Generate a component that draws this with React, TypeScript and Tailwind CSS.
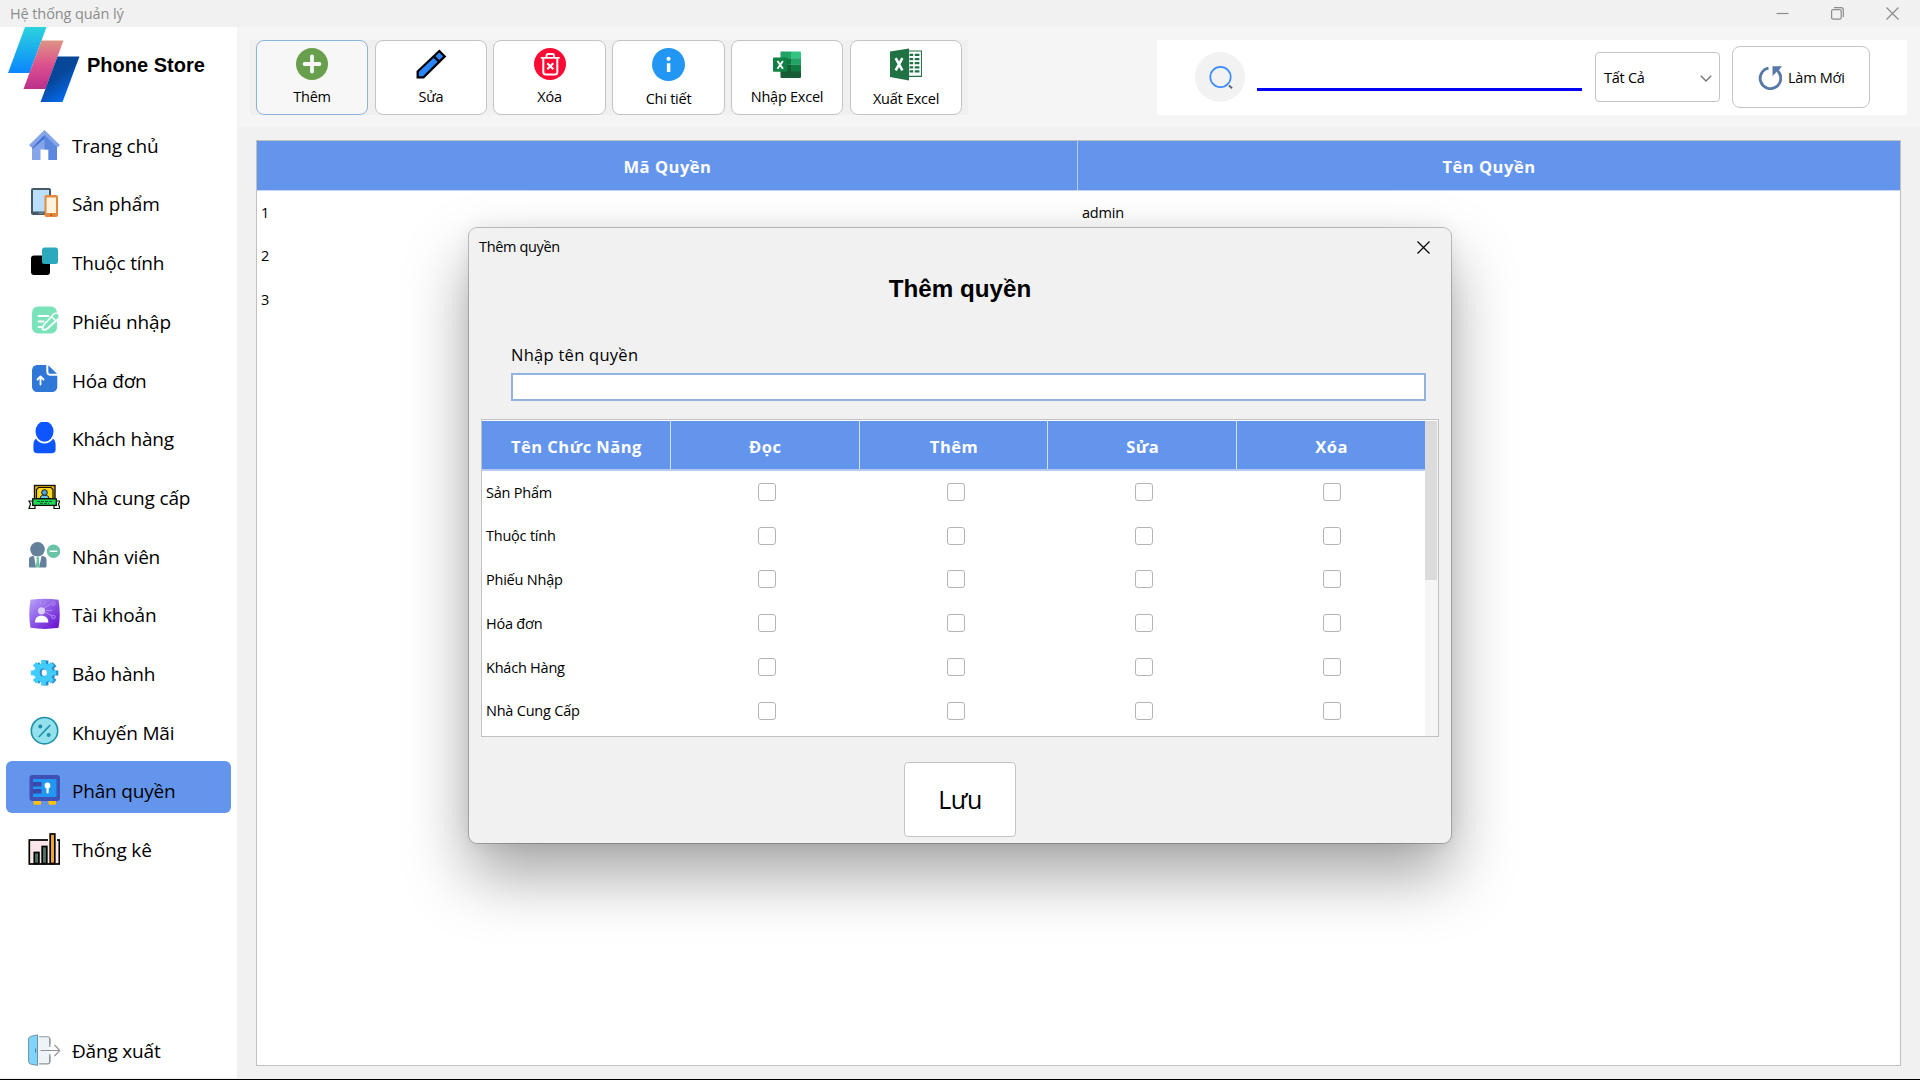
import type { ReactNode } from 'react';

function Icon({ children, className = 'h-8 w-8' }: { children: ReactNode; className?: string }) {
  return (
    <svg viewBox="0 0 32 32" fill="none" className={`shrink-0 ${className}`}>
      {children}
    </svg>
  );
}

const HomeIcon = (
  <Icon>
    <path d="M4 15 16.5 4 29 15v16h-8.5V20.500h-8V31H4z" fill="#86a5e8" />
    <path d="M16.500 4 29 15v16h-8.500V20.500h-4z" fill="#5b87df" />
    <path d="M16.500 1 1 16l2.500 2.500L16.500 6l13 12.500L32 16z" fill="#86a5e8" />
    <path d="M4.500 18.500 16.500 6v3.500L4.500 20z" fill="#3f6fd6" />
  </Icon>
);
const DevicesIcon = (
  <Icon>
    <rect x="3" y="1" width="20" height="27" rx="2" fill="#455a64" />
    <rect x="5" y="3" width="16" height="21.500" fill="#bbdefb" />
    <rect x="10.500" y="25.500" width="5" height="1.300" fill="#78909c" />
    <rect x="16.500" y="8" width="13.500" height="22" rx="2" fill="#e38939" />
    <rect x="18.500" y="10.500" width="9.500" height="15.500" fill="#fff3e0" />
    <circle cx="23.200" cy="28" r="1" fill="#a65a1c" />
  </Icon>
);
const AttributeIcon = (
  <Icon>
    <rect x="3" y="9.500" width="19" height="19.500" rx="3" fill="#000" />
    <rect x="14" y="1.500" width="16" height="16.500" rx="2.500" fill="#2ca9bc" />
  </Icon>
);
const ReceiptIcon = (
  <Icon>
    <rect x="4" y="1.600" width="25" height="27" rx="6" fill="#7be3ba" />
    <path d="M10.500 11h10M10.500 16.500h5M10.500 22h3" stroke="#fff" strokeWidth="1.800" strokeLinecap="round" />
    <path
      d="M25.500 9.500c1.500-1.500 3-1.500 4.500 0s1.500 3 0 4.500L19.500 23.500c-1.500 1.200-3.500 1.500-5 1 0-2 .3-3.500 1.500-5z"
      fill="#7be3ba"
      stroke="#fff"
      strokeWidth="1.800"
      strokeLinejoin="round"
    />
    <path d="m23.500 11.500 4 4" stroke="#fff" strokeWidth="1.500" />
    <path d="M26.500 9.500c1.300-1 2.300-.9 3.300.1s1.200 2 0 3.300l-1.500 1.300-3.300-3.300z" fill="#7be3ba" />
  </Icon>
);
const InvoiceIcon = (
  <Icon>
    <path
      d="M10 2h8.300v6.500c0 2.800 1.500 4.300 4.200 4.300H29.300V23c0 4-2 6-6 6H10c-4 0-6-2-6-6V8c0-4 2-6 6-6z"
      fill="#2f78d8"
    />
    <path d="M20.300 2.200 29 10.800h-6.300c-1.700 0-2.400-.8-2.400-2.400z" fill="#2f78d8" />
    <path d="M12.500 21.500v-8m-3 3 3-3 3 3" stroke="#fff" strokeWidth="1.800" strokeLinecap="round" strokeLinejoin="round" />
  </Icon>
);
const CustomerIcon = (
  <Icon>
    <ellipse cx="16.500" cy="9.500" rx="9" ry="10.200" fill="#0d56ff" />
    <path
      d="M8 16.800c1.800 3 5 4.800 8.500 4.800s6.700-1.800 8.500-4.800c1.800 1 2.600 3.500 2.600 6.200v4.500c0 2.500-1.300 3.700-4 3.700H9.400c-2.700 0-4-1.200-4-3.700V23c0-2.700.8-5.200 2.600-6.200z"
      fill="#0d56ff"
    />
  </Icon>
);
const SupplierIcon = (
  <Icon>
    <rect x="6.500" y="4.500" width="20.500" height="17" fill="#f7b500" stroke="#111" strokeWidth="1.400" />
    <path d="M10.500 6.500h12.500l2 2v9H8.500v-9z" fill="#ffd91a" stroke="#111" strokeWidth="1.200" />
    <path d="M12 17.500c.4-2.400 2-3.700 4.500-3.700s4.100 1.300 4.500 3.700z" fill="#6cc5f0" stroke="#111" strokeWidth="1" />
    <circle cx="16.500" cy="11.500" r="2.800" fill="#4aa8e8" stroke="#111" strokeWidth="1" />
    <path d="M5 20H1l1.500 3L1 27.500h6V22zM28 20h4l-1.500 3 1.500 4.500h-6V22z" fill="#eafbe9" stroke="#111" strokeWidth="1.200" />
    <rect x="4.700" y="17.800" width="23.600" height="6.600" fill="#1fd655" stroke="#111" strokeWidth="1.300" />
    <path d="M9 20.500h15M12 22.300h9" stroke="#0d5c26" strokeWidth="1" strokeDasharray="3 1" />
  </Icon>
);
const EmployeeIcon = (
  <Icon>
    <circle cx="9.500" cy="10.300" r="7.300" fill="#64809a" />
    <path d="M1 20.500c0-2.200 1.500-3.500 5-3.500l2 11.500H2.500c-1 0-1.500-.5-1.500-1.500zM18.500 20.500c0-2.200-1.500-3.500-5-3.500l-2.300 11.500H17c1 0 1.500-.5 1.500-1.500z" fill="#64809a" />
    <path d="m8.300 19 1.500-1.500 1.500 1.500-.5 1.500 1.200 8h-4.300l1.200-8z" fill="#6cc3a5" />
    <circle cx="25.500" cy="12.200" r="6.700" fill="#6cc3a5" />
    <path d="M22.300 12.200h6.400" stroke="#fff" strokeWidth="1.500" strokeLinecap="round" />
  </Icon>
);
const AccountIcon = (
  <Icon>
    <defs>
      <linearGradient id="account" x1="4" y1="2" x2="30" y2="30" gradientUnits="userSpaceOnUse">
        <stop stopColor="#b39bf7" />
        <stop offset=".5" stopColor="#8a55e6" />
        <stop offset="1" stopColor="#6a10cf" />
      </linearGradient>
    </defs>
    <path d="M2.500 1.800Q16.500-.5 30.500 1.800 33 16 30.500 29.800 16.500 32 2.500 29.800 0 16 2.500 1.800z" fill="url(#account)" />
    <path d="m16 10 7-4M17 14l7 4M13.500 7 12 3.500M15.500 7 18 3.500M18 12.500h6" stroke="#b68df5" strokeWidth="1" />
    <circle cx="25.500" cy="5.500" r="1.700" stroke="#b68df5" />
    <circle cx="25.500" cy="19" r="1.700" stroke="#b68df5" />
    <circle cx="13.500" cy="12.800" r="3.600" fill="#ddd0fb" />
    <path d="M7 24.500c0-4.500 2.200-6.800 6.500-6.800s6.800 2.300 6.800 6.800z" fill="#fff" />
  </Icon>
);
const GearIcon = (
  <Icon>
    <g fill="#2f86c4">
      <circle cx="17.800" cy="16" r="9.500" />
      <path
        d="M17.800 3.500v25M5.300 16h25M9 7.200l17.600 17.600M26.600 7.200 9 24.800"
        stroke="#2f86c4"
        strokeWidth="5.200"
      />
    </g>
    <circle cx="15.500" cy="15.800" r="9.500" fill="#41cdfb" />
    <path d="M15.500 3v25.600M2.800 15.800h25.400M6.500 6.800l18 18M24.500 6.800l-18 18" stroke="#41cdfb" strokeWidth="4.800" />
    <ellipse cx="15.300" cy="15.500" rx="3.600" ry="4" fill="#2f86c4" />
    <ellipse cx="16.300" cy="15.800" rx="2.600" ry="3.200" fill="#fff" />
  </Icon>
);
const PromoIcon = (
  <Icon>
    <circle cx="16.500" cy="15.700" r="13.200" fill="#94e1ee" stroke="#1d91a8" strokeWidth="1.600" />
    <path d="m11.300 21.500 10.500-11" stroke="#1d91a8" strokeWidth="1.700" strokeLinecap="round" />
    <circle cx="12.300" cy="11.600" r="2" fill="#1d91a8" />
    <circle cx="20.600" cy="19.900" r="2" fill="#1d91a8" />
  </Icon>
);
const SafeIcon = (
  <Icon>
    <path d="M5.500 26h7.500v3.500q0 1.300-1.300 1.300H6.800q-1.300 0-1.300-1.300zM20.500 26H28v3.500q0 1.300-1.300 1.300h-4.900q-1.300 0-1.300-1.300z" fill="#ffc107" />
    <rect x="1.500" y="1" width="30.500" height="26" rx="3" fill="#3f51b5" />
    <rect x="5" y="5" width="23.500" height="18" fill="#2196f3" />
    <path d="M5 8h8.500v4.500H5zM5 15h8.500v4.500H5z" fill="#3949ab" />
    <circle cx="19.500" cy="11.500" r="2.900" fill="#fff" />
    <rect x="18.500" y="12" width="2.200" height="7.500" rx="1" fill="#fff" />
  </Icon>
);
const ChartIcon = (
  <Icon>
    <rect x="1.300" y="7" width="30" height="24" fill="#fde6e8" stroke="#000" strokeWidth="1.700" />
    <rect x="20" y="5" width="9" height="4" fill="#fff" />
    <rect x="6.300" y="19.500" width="4.600" height="11" fill="#4f7468" stroke="#000" strokeWidth="1.700" />
    <rect x="14.200" y="13.500" width="4.600" height="17" fill="#4f7468" stroke="#000" strokeWidth="1.700" />
    <rect x="22.200" y="1" width="4.600" height="29.500" fill="#f5a92e" stroke="#000" strokeWidth="1.700" />
  </Icon>
);
const LogoutIcon = (
  <Icon>
    <path d="M11 2.800h8.500q2.300 0 2.300 2.300v5M21.800 22v5.500q0 2.300-2.300 2.300H11" fill="#ecf4f8" stroke="#90979f" strokeWidth="1.300" />
    <path d="M10 3.500h11v25H10z" fill="#ecf4f8" />
    <path d="M21.800 5v8M21.800 20v8" stroke="#90979f" strokeWidth="1.300" />
    <path d="M9.500.8v30.600L2.500 30Q.6 29.300.6 27.500V5Q.6 3.200 2.500 2.500z" fill="#80d4fb" stroke="#6f8fa3" />
    <path d="M7.500 14.500v4" stroke="#4f7f99" />
    <path d="M12.500 16.500H32M26.500 11l5.500 5.500-5.500 5.500" stroke="#90909c" strokeWidth="1.200" />
  </Icon>
);

const NAV: { label: string; icon: ReactNode; active?: boolean }[] = [
  { label: 'Trang chủ', icon: HomeIcon },
  { label: 'Sản phẩm', icon: DevicesIcon },
  { label: 'Thuộc tính', icon: AttributeIcon },
  { label: 'Phiếu nhập', icon: ReceiptIcon },
  { label: 'Hóa đơn', icon: InvoiceIcon },
  { label: 'Khách hàng', icon: CustomerIcon },
  { label: 'Nhà cung cấp', icon: SupplierIcon },
  { label: 'Nhân viên', icon: EmployeeIcon },
  { label: 'Tài khoản', icon: AccountIcon },
  { label: 'Bảo hành', icon: GearIcon },
  { label: 'Khuyến Mãi', icon: PromoIcon },
  { label: 'Phân quyền', icon: SafeIcon, active: true },
  { label: 'Thống kê', icon: ChartIcon },
];

function NavItem({ label, icon, active }: { label: string; icon: ReactNode; active?: boolean }) {
  return (
    <div
      className={`flex h-[52px] w-[225px] items-center rounded-md pt-[7px] pl-[22px] text-[19px] tracking-[-0.180px] ${
        active ? 'bg-[#6495ed]' : ''
      }`}
    >
      {icon}
      <span className="ml-3 pt-[3px] whitespace-nowrap">{label}</span>
    </div>
  );
}

function Logo() {
  return (
    <svg viewBox="0 0 72 76" className="h-[76px] w-[72px] shrink-0">
      <defs>
        <linearGradient id="lg1" x1="0" y1="0" x2="0" y2="1">
          <stop stopColor="#2bd4dd" />
          <stop offset="1" stopColor="#0a86ff" />
        </linearGradient>
        <linearGradient id="lg2" x1="0" y1="0" x2="0" y2="1">
          <stop stopColor="#dd9482" />
          <stop offset=".5" stopColor="#dc518e" />
          <stop offset="1" stopColor="#bb2f8b" />
        </linearGradient>
        <linearGradient id="lg3" x1=".2" y1=".2" x2=".7" y2="1">
          <stop offset=".35" stopColor="#07479a" />
          <stop offset="1" stopColor="#036ffb" />
        </linearGradient>
      </defs>
      <path d="M17 0h21.500l-17 46H0z" fill="url(#lg1)" />
      <path d="M33.500 13.500H55.500L37.500 62h-22z" fill="url(#lg2)" />
      <path d="M49.500 29.500H71.500L54.500 75H32.500z" fill="url(#lg3)" />
    </svg>
  );
}

const AddIcon = (
  <Icon>
    <circle cx="16" cy="16" r="16" fill="#689f4c" />
    <path d="M16 8.500v15M8.500 16h15" stroke="#f7f7f7" strokeWidth="3.800" strokeLinecap="round" />
  </Icon>
);
const PencilIcon = (
  <Icon>
    <path d="M2.700 23.500 24.300 3l5.400 5.400L8.500 29.300H2.700z" fill="#2b87ff" stroke="#000" strokeWidth="2.300" />
    <path d="m18.800 8.400 5.600 5.500" stroke="#000" strokeWidth="2.300" />
  </Icon>
);
const TrashIcon = (
  <Icon>
    <circle cx="16" cy="16" r="16" fill="#ff0a33" />
    <path d="M7.500 9.800h17.500M12.500 9V7.500q0-1.500 1.500-1.500h4.500q1.500 0 1.500 1.500V9" stroke="#fff" strokeWidth="1.800" strokeLinecap="round" />
    <path d="M9.300 10.500V24q0 2.500 2.500 2.500h9q2.500 0 2.500-2.500V10.500" stroke="#fff" strokeWidth="2" />
    <path d="m13.300 15.200 6 6m0-6-6 6" stroke="#fff" strokeWidth="2" />
  </Icon>
);
const InfoIcon = (
  <Icon className="h-[33px] w-[33px]">
    <circle cx="16" cy="16" r="16" fill="#2196f3" />
    <circle cx="16" cy="10.500" r="2" fill="#fff" />
    <path d="M14.400 14.800h3.400v8.500h-3.400z" fill="#fff" />
  </Icon>
);
const ImportIcon = (
  <Icon>
    <path d="M9.500 3.500H20v6.700H9.500z" fill="#21a366" />
    <path d="M20 3.500h9q1 0 1 1v5.700H20z" fill="#33c481" />
    <path d="M9.500 10.200H20v6.700H9.500z" fill="#107c41" />
    <path d="M20 10.200h10v6.700H20z" fill="#21a366" />
    <path d="M9.500 16.900H30v12q0 1-1 1H10.500q-1 0-1-1z" fill="#185c37" />
    <path d="M20 16.900h10v6.500H20z" fill="#107c41" />
    <path d="M17 10.500v14H9.500v-14z" fill="#0b5c30" opacity=".6" />
    <rect x="2" y="9.500" width="14.500" height="14.300" rx="1" fill="#118043" />
    <path d="m6.500 13 5.400 7.800m0-7.800-5.400 7.800" stroke="#fff" strokeWidth="1.900" />
  </Icon>
);
const ExportIcon = (
  <Icon className="h-[33px] w-[33px]">
    <path d="M17 3h13.500v24.500H17z" fill="#fff" stroke="#207245" strokeWidth="1" />
    <path d="M19 6.700h3.500M19 10.700h3.500M19 14.700h3.500M19 18.700h3.500M19 22.700h3.500M24 6.700h4.500M24 10.700h4.500M24 14.700h4.500M24 18.700h4.500M24 22.700h4.500" stroke="#207245" strokeWidth="2.200" />
    <path d="M0 3.500 18.500.5v31L0 28z" fill="#207245" />
    <path d="m5.500 9.800 6.500 12m0-12-6.500 12" stroke="#fff" strokeWidth="2.500" />
  </Icon>
);

function ToolButton({ label, icon, className, labelClass }: { label: string; icon: ReactNode; className: string; labelClass: string }) {
  return (
    <div className={`flex h-[75px] flex-col items-center rounded-lg border pt-[7px] ${className}`}>
      {icon}
      <span className={`text-[14.5px] leading-5 tracking-[-0.25px] whitespace-nowrap ${labelClass}`}>{label}</span>
    </div>
  );
}

const FUNCTIONS = ['Sản Phẩm', 'Thuộc tính', 'Phiếu Nhập', 'Hóa đơn', 'Khách Hàng', 'Nhà Cung Cấp'];
const ACTIONS = ['Đọc', 'Thêm', 'Sửa', 'Xóa'];

function CloseGlyph() {
  return (
    <svg viewBox="0 0 13 13" className="h-[13px] w-[13px]" stroke="currentColor" strokeWidth="1.200">
      <path d="m.5.500 12 12m0-12-12 12" />
    </svg>
  );
}

function Dialog() {
  return (
    <div className="absolute top-[228px] left-[469px] flex h-[615px] w-[982px] flex-col rounded-lg bg-[#f1f1f1] shadow-[0_0_0_1px_rgba(0,0,0,0.22),0_0_18px_rgba(0,0,0,0.07),0_32px_64px_rgba(0,0,0,0.36)]">
      <div className="flex h-[38px] shrink-0 items-center justify-between pr-[21px] pl-[10px] text-[14.5px] tracking-[-0.350px]">
        <span>Thêm quyền</span>
        <CloseGlyph />
      </div>
      <h1 className="h-[47px] shrink-0 text-center font-['Liberation_Sans',sans-serif] text-[24.200px] leading-[45px] font-bold">
        Thêm quyền
      </h1>
      <label className="mt-[30px] ml-[42px] block h-[24px] text-[16.500px] leading-6 tracking-[0.270px]">Nhập tên quyền</label>
      <div className="mt-[6px] ml-[42px] h-[28px] w-[915px] shrink-0 border-2 border-[#8fb4de] bg-white" />
      <div className="mt-[18px] ml-3 flex h-[318px] w-[958px] shrink-0 border border-[#c1c1c1] bg-white pt-px">
        <div className="w-[943px]">
          <div className="flex h-[50px] border-b-2 border-[#b6cbf1] bg-[#6495ed] text-[16.500px] font-bold tracking-[0.480px] text-white">
            {['Tên Chức Năng', ...ACTIONS].map((h, i) => (
              <div key={h} className={`flex flex-1 items-center justify-center pt-[5px] pl-px ${i < 4 ? 'border-r border-[#d3dff6]' : ''}`}>
                {h}
              </div>
            ))}
          </div>
          {FUNCTIONS.map((f) => (
            <div key={f} className="flex h-[43.750px] items-center pb-[2px] text-[14.500px] tracking-[-0.220px]">
              <span className="flex-1 pt-px pl-1">{f}</span>
              {ACTIONS.map((a) => (
                <span key={a} className="flex flex-1 justify-center pl-[2.300px]">
                  <span className="h-[18px] w-[18px] rounded-[3px] border-[1.500px] border-[#b4b4b4] bg-white" />
                </span>
              ))}
            </div>
          ))}
        </div>
        <div className="h-full w-[12px] bg-[#f5f5f5]">
          <div className="h-[159px] bg-[#dbdbdb]" />
        </div>
        <div className="flex-1 bg-[#f5f5f5]" />
      </div>
      <div className="mt-[25px] ml-[435px] flex h-[75px] w-[112px] shrink-0 items-center justify-center rounded border border-[#c4c4c4] bg-white text-[25px] tracking-[-0.400px]">
        Lưu
      </div>
    </div>
  );
}

export default function App() {
  return (
    <div className="relative flex h-[1080px] w-[1920px] flex-col overflow-hidden border-b border-black bg-[#f1f1f1] font-['Open_Sans','Noto_Sans',sans-serif] text-black">
      <header className="flex h-[27px] shrink-0 items-center justify-between pr-[21px] pl-[10px] text-[14.500px] tracking-[-0.100px] text-[#8c8c8c]">
        <span>Hệ thống quản lý</span>
        <div className="flex items-center gap-[42px]">
          <svg viewBox="0 0 13 13" className="h-[13px] w-[13px]" stroke="currentColor" strokeWidth="1.200">
            <path d="M.5 6.500h12" />
          </svg>
          <svg viewBox="0 0 13 13" className="h-[13px] w-[13px]" fill="none" stroke="currentColor" strokeWidth="1.200">
            <rect x=".6" y="2.600" width="9.600" height="9.600" rx="1.500" />
            <path d="M3 .6h7q2.300 0 2.300 2.300V10" />
          </svg>
          <CloseGlyph />
        </div>
      </header>
      <div className="flex min-h-0 flex-1 pb-px">
        <aside className="flex w-[237px] shrink-0 flex-col bg-white">
          <div className="flex h-[88px] shrink-0 items-start pl-2">
            <Logo />
            <span className="mt-[23px] ml-[7px] font-['Liberation_Sans',sans-serif] text-[20px] leading-[30px] font-bold whitespace-nowrap">
              Phone Store
            </span>
          </div>
          <nav className="flex flex-col gap-[6.700px] pl-[6px]">
            {NAV.map((n) => (
              <NavItem key={n.label} {...n} />
            ))}
          </nav>
          <div className="mt-auto mb-[6px] pl-[6px]">
            <NavItem label="Đăng xuất" icon={LogoutIcon} />
          </div>
        </aside>
        <main className="flex flex-1 flex-col">
          <div className="flex h-[100px] shrink-0 justify-between bg-[#f5f5f5] py-[13px] pr-[13px] pl-[13px]">
            <div className="flex h-[75px] w-[718px] bg-[#f0f0f0] pl-[6px]">
              <ToolButton label="Thêm" icon={AddIcon} className="w-[112px] border-[#8ab4dd] bg-[#f7f7f7]" labelClass="mt-[7px]" />
              <ToolButton label="Sửa" icon={PencilIcon} className="ml-[7px] w-[112px] border-[#c4c4c4] bg-white" labelClass="mt-[7px]" />
              <ToolButton label="Xóa" icon={TrashIcon} className="ml-[6px] w-[113px] border-[#c4c4c4] bg-white" labelClass="mt-[7px]" />
              <ToolButton label="Chi tiết" icon={InfoIcon} className="ml-[6px] w-[113px] border-[#c4c4c4] bg-white" labelClass="mt-[8px]" />
              <ToolButton label="Nhập Excel" icon={ImportIcon} className="ml-[6px] w-[112px] border-[#c4c4c4] bg-white" labelClass="mt-[7px]" />
              <ToolButton label="Xuất Excel" icon={ExportIcon} className="ml-[7px] w-[112px] border-[#c4c4c4] bg-white" labelClass="mt-[8px]" />
            </div>
            <div className="flex h-[75px] w-[750px] items-start bg-white pl-[38px]">
              <div className="mt-3 flex h-[50px] w-[50px] items-center justify-center rounded-full bg-[#f2f2f2] pl-px">
                <svg viewBox="0 0 24 24" fill="none" className="h-6 w-6">
                  <circle cx="11.500" cy="12" r="10.200" stroke="#3a8bfb" strokeWidth="1.700" />
                  <path d="m20 20.500 3 2.800" stroke="#5f6480" strokeWidth="2" />
                </svg>
              </div>
              <div className="mt-[48px] ml-3 h-[3px] w-[325px] bg-[#0000ff]" />
              <div className="mt-3 ml-[13px] flex h-[50px] w-[125px] items-center justify-between rounded border border-[#c4c4c4] bg-white pr-[7px] pl-2 text-[14.500px] tracking-[-0.250px]">
                <span className="pt-[2px]">Tất Cả</span>
                <svg viewBox="0 0 12 7" fill="none" className="mt-[2px] h-[7px] w-3">
                  <path d="m.8.800 5.200 5.200L11.200.8" stroke="#777" strokeWidth="1.400" />
                </svg>
              </div>
              <div className="mt-[6px] ml-3 flex h-[62px] w-[138px] items-center rounded-lg border border-[#c4c4c4] bg-white pl-[25px] text-[14.500px] tracking-[-0.250px]">
                <svg viewBox="0 0 24 24" fill="none" className="mt-[2px] h-6 w-6">
                  <path d="M10.500 2.200A10.300 10.300 0 1 0 20.200 5.500" stroke="#5878a8" strokeWidth="2.900" />
                  <path d="M14.500.3H24l-2.500 3-1 4-1.700-1.500L14.500 10z" fill="#5878a8" />
                </svg>
                <span className="ml-[6px] pt-[2px] whitespace-nowrap">Làm Mới</span>
              </div>
            </div>
          </div>
          <div className="mt-[13px] ml-[19px] h-[926px] w-[1645px] border border-[#c1c1c1] bg-white">
            <div className="flex h-[50px] border-b border-[#c5d6f5] bg-[#6495ed] text-[16.500px] font-bold tracking-[0.530px] text-white">
              <div className="flex w-[821px] items-center justify-center border-r border-[#b6cbf1] pt-[3px] pl-px">Mã Quyền</div>
              <div className="flex flex-1 items-center justify-center pt-[3px]">Tên Quyền</div>
            </div>
            {[
              ['1', 'admin'],
              ['2', ''],
              ['3', ''],
            ].map(([id, name]) => (
              <div key={id} className="flex h-[43.500px] items-center text-[14.500px] tracking-[-0.200px]">
                <span className="w-[821px] pl-1">{id}</span>
                <span className="flex-1 pl-1">{name}</span>
              </div>
            ))}
          </div>
        </main>
      </div>
      <Dialog />
    </div>
  );
}
